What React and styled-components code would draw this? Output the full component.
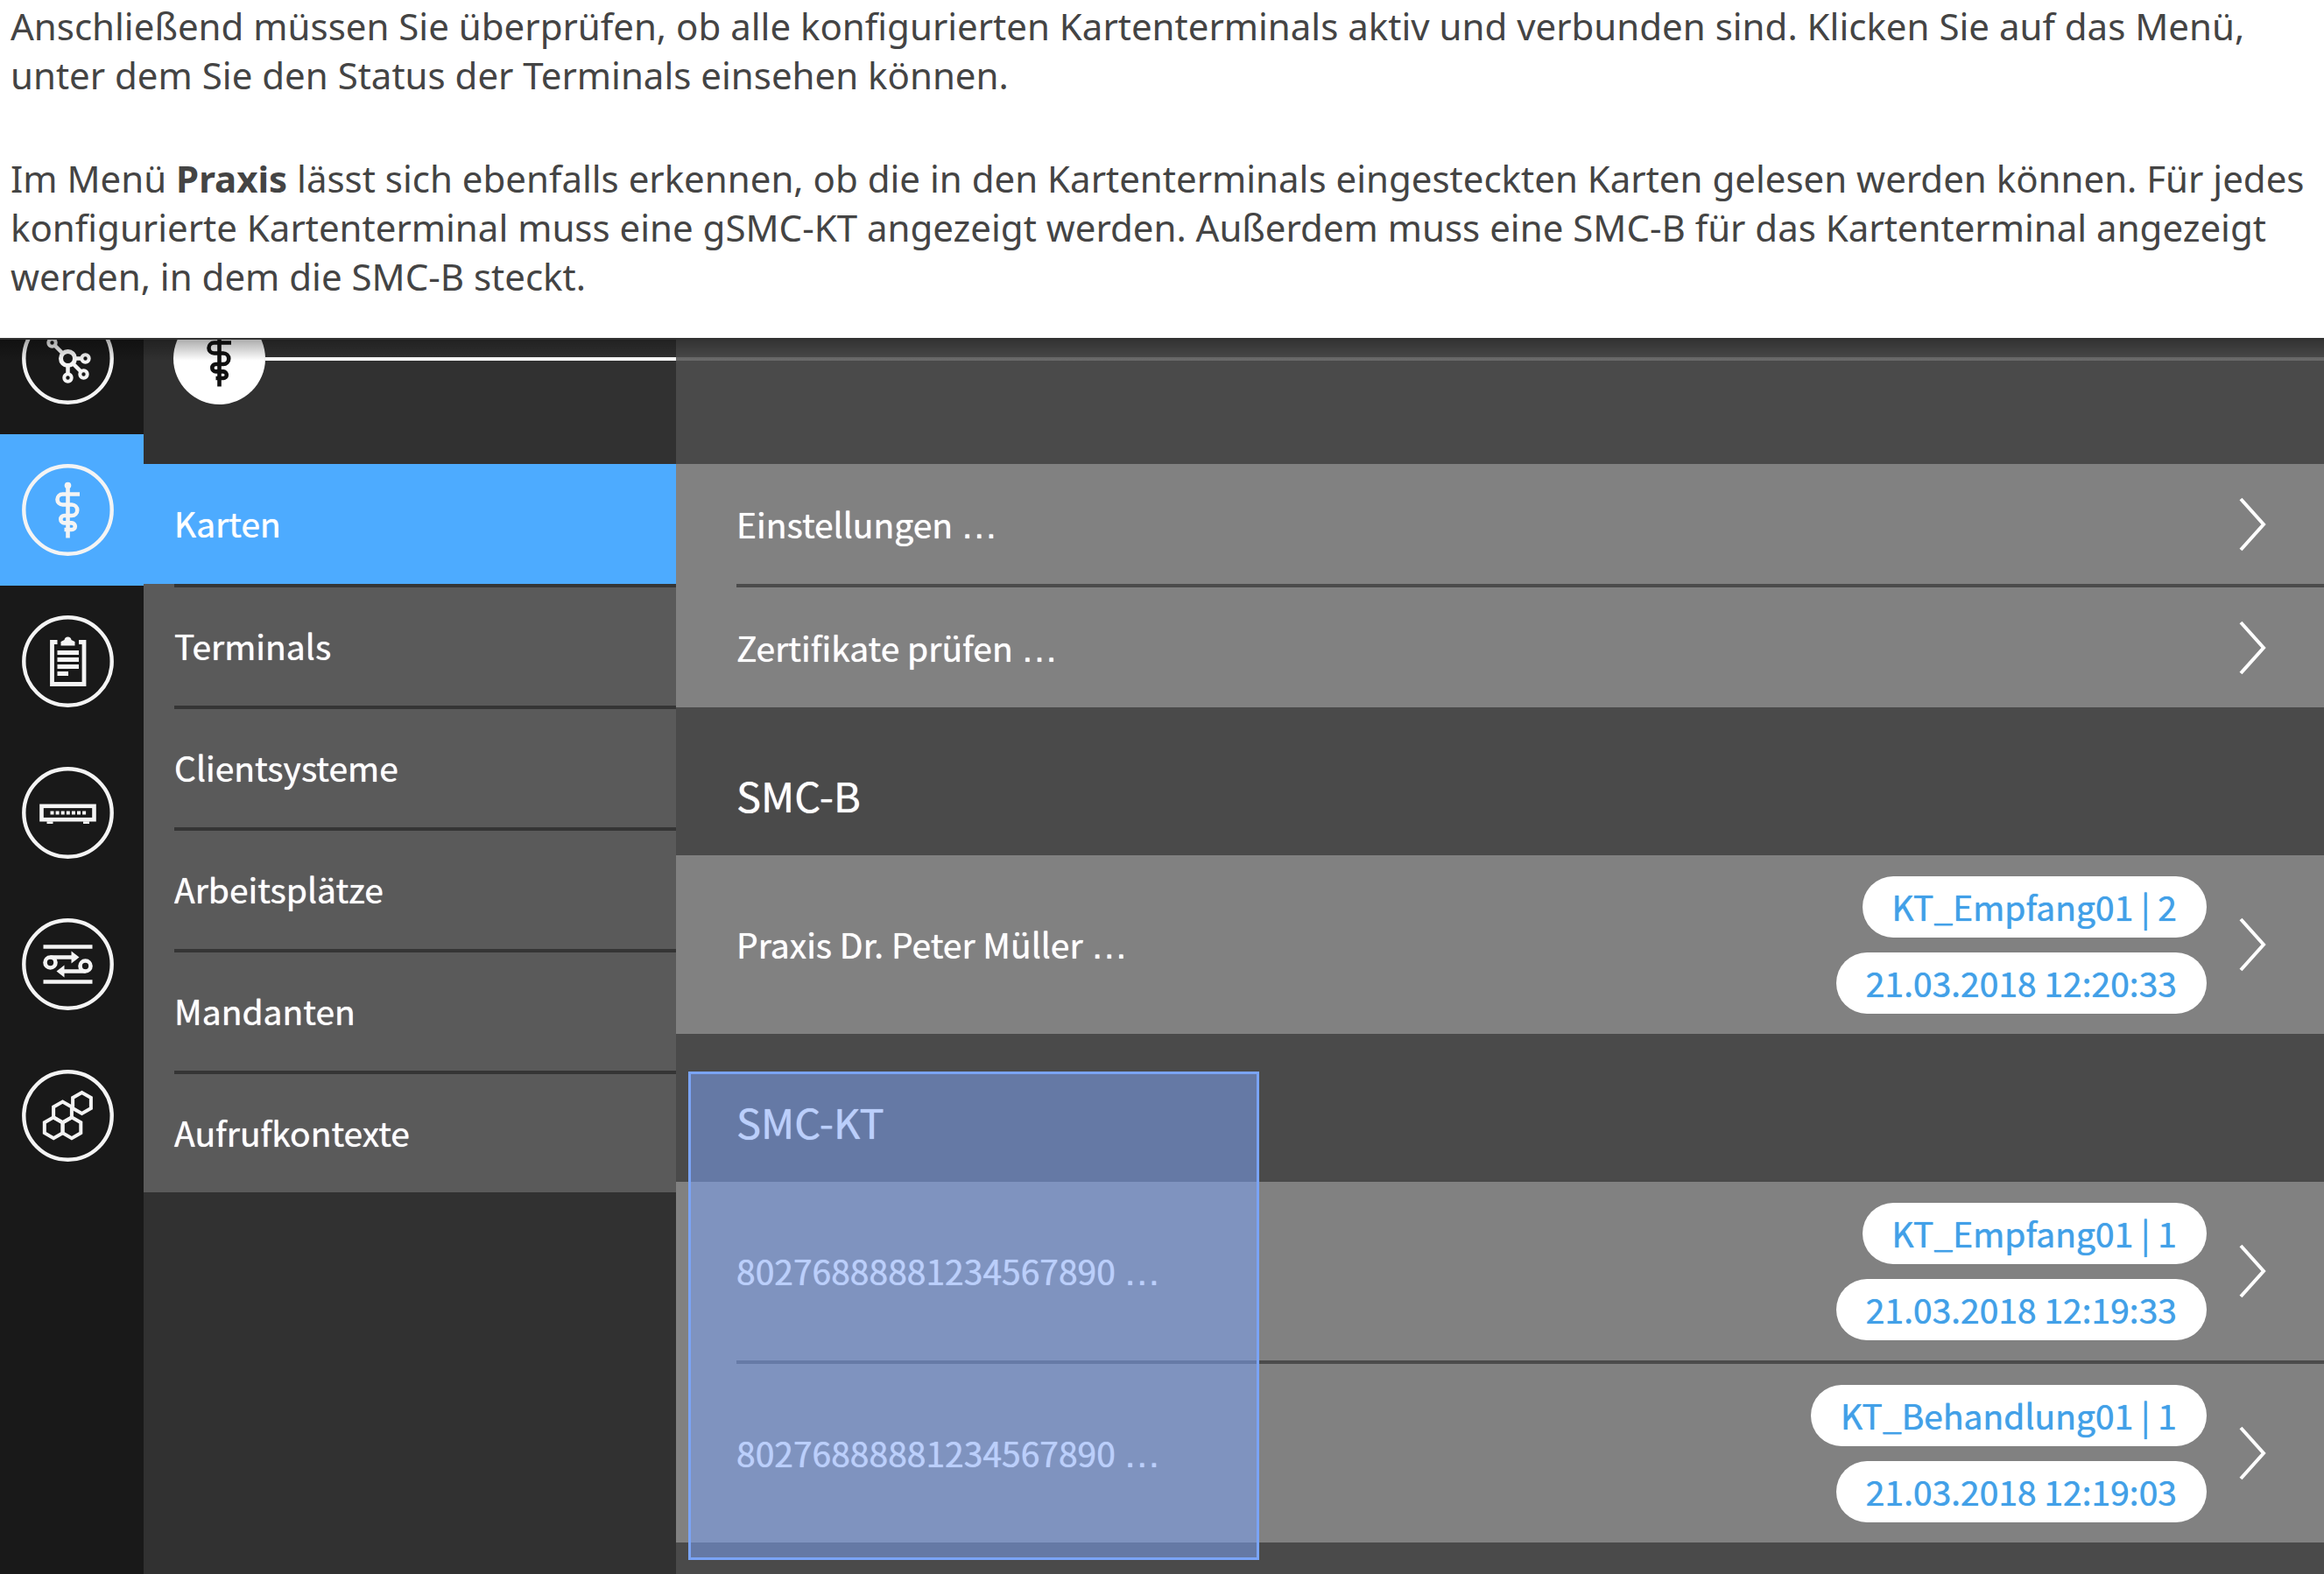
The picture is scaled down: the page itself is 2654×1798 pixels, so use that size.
import React from "react";
import styled, { createGlobalStyle, css } from "styled-components";

const UI_FONT = `"Noto Sans CJK SC", "Noto Sans", sans-serif`;

const GlobalStyle = createGlobalStyle`
  *, *::before, *::after { box-sizing: border-box; }
  body { margin: 0; background: #fff; }
  button { font: inherit; color: inherit; text-shadow: inherit; border: 0; padding: 0; background: none; cursor: pointer; }
  ul { list-style: none; margin: 0; padding: 0; }
`;

const Page = styled.div`
  display: flex;
  flex-direction: column;
  min-height: 100vh;
  font-family: ${UI_FONT};
`;

const Intro = styled.header`
  padding: 2px 12px 42px;
  color: #444;
  font-family: "Noto Sans", "Open Sans", sans-serif;
  font-size: 42px;
  line-height: 56px;
`;

const Paragraph = styled.p`
  margin: 0;
  & + & { margin-top: 62px; }
`;

const Viewport = styled.div`
  flex: 1;
  display: flex;
  position: relative;
  overflow: hidden;
  border-top: 2px solid #333;
  background: #4a4a4a;
  color: #fff;
  font-size: 39px;
  line-height: 56px;
  text-shadow: 0 0 1px currentColor;
`;

const TopShade = styled.div`
  position: absolute;
  inset: 0 0 auto;
  height: 24px;
  background: linear-gradient(rgba(0, 0, 0, 0.32), rgba(0, 0, 0, 0));
  pointer-events: none;
`;

const Scrolled = styled.div`
  flex: 1;
  display: grid;
  grid-template-columns: 164px 608px minmax(0, 1fr);
  margin-top: -65px;
`;

const Rail = styled.nav`
  background: #191919;
`;

const RailButton = styled.button`
  display: flex;
  align-items: center;
  width: 100%;
  height: 173px;
  padding-left: 25px;
  background: ${(p) => (p.$active ? "#4dabff" : "transparent")};
`;

const IconSvg = styled.svg`
  display: block;
  flex: none;
  width: 105px;
  height: 105px;
`;

const Sidebar = styled.div`
  background: #313131;
`;

const HeaderBand = styled.div`
  display: flex;
  align-items: center;
  height: 207px;
  padding-bottom: 34px;
  padding-left: ${(p) => (p.$flush ? 0 : "34px")};
`;

const Track = styled.div`
  flex: 1;
  height: 4px;
  background: ${(p) => (p.$muted ? "#6b6b6b" : "#fff")};
`;

const Menu = styled.ul`
  background: #5a5a5a;
`;

const MenuItem = styled.li`
  & + &::before {
    content: "";
    display: block;
    height: 4px;
    margin-left: 35px;
    background: #353535;
  }
`;

const MenuButton = styled.button`
  display: flex;
  align-items: center;
  width: 100%;
  height: ${(p) => (p.$active ? "137px" : "135px")};
  padding-bottom: 4px;
  padding-left: 35px;
  ${(p) => p.$active && css`background: #4dabff;`}
`;

const Group = styled.section`
  position: relative;
`;

const GroupTitle = styled.h2`
  display: flex;
  align-items: flex-end;
  height: 169px;
  margin: 0;
  padding: 0 69px 34px;
  font-size: 47px;
  font-weight: 400;
  line-height: 70px;
`;

const Row = styled.li`
  background: #818181;
  & + &::before {
    content: "";
    display: block;
    height: 4px;
    margin-left: 69px;
    background: #4b4b4b;
  }
`;

const RowButton = styled.button`
  display: flex;
  align-items: center;
  gap: 37px;
  width: 100%;
  height: ${(p) => (p.$tall ? "204px" : "137px")};
  padding: 0 66px 0 69px;
  text-align: left;
`;

const RowLabel = styled.span`
  flex: 1;
  padding-bottom: 2px;
`;

const Dots = styled.span`
  font-family: "Liberation Sans", sans-serif;
  font-size: 43px;
  line-height: 1;
`;

const Badges = styled.span`
  display: flex;
  flex-direction: column;
  align-items: flex-end;
  gap: 17px;
`;

const Badge = styled.span`
  height: 70px;
  padding: 0 34px;
  border-radius: 35px;
  background: #fff;
  color: #42a0e8;
  line-height: 68px;
`;

const ChevronSvg = styled.svg`
  flex: none;
  width: 31px;
  height: 62px;
`;

const Highlight = styled.div`
  position: absolute;
  top: 43px;
  bottom: -20px;
  left: 14px;
  width: 652px;
  border: 3px solid #7aa4f6;
  background: rgba(127, 165, 248, 0.53);
  background-clip: padding-box;
  pointer-events: none;
`;

function hexagon(cx, cy, r) {
  return Array.from({ length: 6 }, (_, i) => {
    const a = (Math.PI / 3) * i + Math.PI / 6;
    return `${(cx + r * Math.cos(a)).toFixed(2)},${(cy + r * Math.sin(a)).toFixed(2)}`;
  }).join(" ");
}

const glyphs = {
  network: (
    <g fill="none" strokeWidth="5">
      <circle r="8" />
      <path d="M8 0H16M6 6L15 15M0 8V18M-6 -6L-15 -15" strokeWidth="4.5" />
      <g strokeWidth="4">
        <circle cx="20" cy="0" r="4.2" />
        <circle cx="18" cy="18" r="4.2" />
        <circle cx="0" cy="22" r="4.2" />
        <circle cx="-18" cy="-18" r="4.2" />
      </g>
    </g>
  ),
  practice: (
    <g fill="none" strokeWidth="4.6">
      <circle cy="-28" r="3.8" fill="currentColor" stroke="none" />
      <path d="M0 -28V32" />
      <path d="M13.5 -18H-6a6 6 0 0 0 0 12H4.5a6 6 0 0 1 0 12.5H-4a4.2 4.2 0 0 0 0 8.4H4.5a3.8 3.8 0 0 1 0 7.6H-4" />
    </g>
  ),
  clipboard: (
    <g fill="none" strokeWidth="4.8">
      <path d="M-12 -22H-18V26H18.5V-22H12.5" />
      <path d="M-12 -10H12.5M-12 -2H12.5M-12 6H12.5M-12 14H0.5" />
      <path
        d="M-8 -18V-22.5L-4 -24.5Q-3.5 -28 0 -28T4 -24.5L8 -22.5V-18Z"
        fill="currentColor"
        stroke="none"
      />
    </g>
  ),
  router: (
    <g fill="none" strokeWidth="4.6">
      <rect x="-30" y="-7.7" width="60" height="15.4" />
      <path d="M-20 0H21" strokeWidth="4" strokeDasharray="4 2.1" />
      <path d="M-24 11.2H-17M17.5 11.2H24.5" strokeWidth="2.8" />
    </g>
  ),
  transfer: (
    <g fill="none" strokeWidth="4.6">
      <path d="M-28 -20H28M-28 20H28" />
      <circle cx="-20" cy="-2" r="6" />
      <circle cx="20" cy="2" r="6" />
      <path d="M-20 -8H5M20 8H-5" />
      <path d="M4 -15L13 -8L4 -1ZM-4 15L-13 8L-4 1Z" fill="currentColor" stroke="none" />
    </g>
  ),
  cells: (
    <g fill="none" strokeWidth="4">
      <polygon points={hexagon(16, -14.5, 12)} />
      <polygon points={hexagon(-6, -4, 12)} />
      <polygon points={hexagon(-16.3, 13.7, 12)} />
      <polygon points={hexagon(4.4, 13.7, 12)} />
    </g>
  ),
};

function RoundIcon({ name, solid }) {
  return (
    <IconSvg viewBox="-52.5 -52.5 105 105" aria-hidden="true" color={solid ? "#111" : "#f4f4f4"}>
      <circle
        r={solid ? 52.5 : 50.2}
        fill={solid ? "#fff" : "none"}
        stroke={solid ? "none" : "currentColor"}
        strokeWidth="4.4"
      />
      <g stroke="currentColor">{glyphs[name]}</g>
    </IconSvg>
  );
}

function Chevron() {
  return (
    <ChevronSvg viewBox="0 0 31 62" aria-hidden="true">
      <path d="M2 2L28 31L2 60" fill="none" stroke="#fff" strokeWidth="4" />
    </ChevronSvg>
  );
}

function ListRow({ label, badges }) {
  return (
    <Row>
      <RowButton type="button" $tall={Boolean(badges)}>
        <RowLabel>
          {label} <Dots>…</Dots>
        </RowLabel>
        {badges && (
          <Badges>
            {badges.map((text) => (
              <Badge key={text}>{text}</Badge>
            ))}
          </Badges>
        )}
        <Chevron />
      </RowButton>
    </Row>
  );
}

const railItems = [
  { icon: "network", label: "Netzwerk" },
  { icon: "practice", label: "Praxis", active: true },
  { icon: "clipboard", label: "Protokoll" },
  { icon: "router", label: "Konnektor" },
  { icon: "transfer", label: "Übertragung" },
  { icon: "cells", label: "Module" },
];

const menuItems = ["Karten", "Terminals", "Clientsysteme", "Arbeitsplätze", "Mandanten", "Aufrufkontexte"];

export default function App() {
  return (
    <Page lang="de">
      <GlobalStyle />
      <Intro>
        <Paragraph>
          Anschließend müssen Sie überprüfen, ob alle konfigurierten Kartenterminals aktiv und verbunden sind.
          Klicken Sie auf das Menü, unter dem Sie den Status der Terminals einsehen können.
        </Paragraph>
        <Paragraph>
          Im Menü <b>Praxis</b> lässt sich ebenfalls erkennen, ob die in den Kartenterminals eingesteckten Karten
          gelesen werden können. Für jedes konfigurierte Kartenterminal muss eine gSMC-KT angezeigt werden.
          Außerdem muss eine SMC-B für das Kartenterminal angezeigt werden, in dem die SMC-B steckt.
        </Paragraph>
      </Intro>
      <Viewport>
        <Scrolled>
          <Rail>
            {railItems.map((item) => (
              <RailButton key={item.icon} type="button" aria-label={item.label} $active={item.active}>
                <RoundIcon name={item.icon} />
              </RailButton>
            ))}
          </Rail>
          <Sidebar>
            <HeaderBand>
              <RoundIcon name="practice" solid />
              <Track />
            </HeaderBand>
            <Menu>
              {menuItems.map((label, i) => (
                <MenuItem key={label}>
                  <MenuButton type="button" $active={i === 0}>
                    {label}
                  </MenuButton>
                </MenuItem>
              ))}
            </Menu>
          </Sidebar>
          <main>
            <HeaderBand $flush>
              <Track $muted />
            </HeaderBand>
            <ul>
              <ListRow label="Einstellungen" />
              <ListRow label="Zertifikate prüfen" />
            </ul>
            <Group>
              <GroupTitle>SMC-B</GroupTitle>
              <ul>
                <ListRow label="Praxis Dr. Peter Müller" badges={["KT_Empfang01 | 2", "21.03.2018 12:20:33"]} />
              </ul>
            </Group>
            <Group>
              <GroupTitle>SMC-KT</GroupTitle>
              <ul>
                <ListRow label="80276888881234567890" badges={["KT_Empfang01 | 1", "21.03.2018 12:19:33"]} />
                <ListRow label="80276888881234567890" badges={["KT_Behandlung01 | 1", "21.03.2018 12:19:03"]} />
              </ul>
              <Highlight />
            </Group>
          </main>
        </Scrolled>
        <TopShade />
      </Viewport>
    </Page>
  );
}
